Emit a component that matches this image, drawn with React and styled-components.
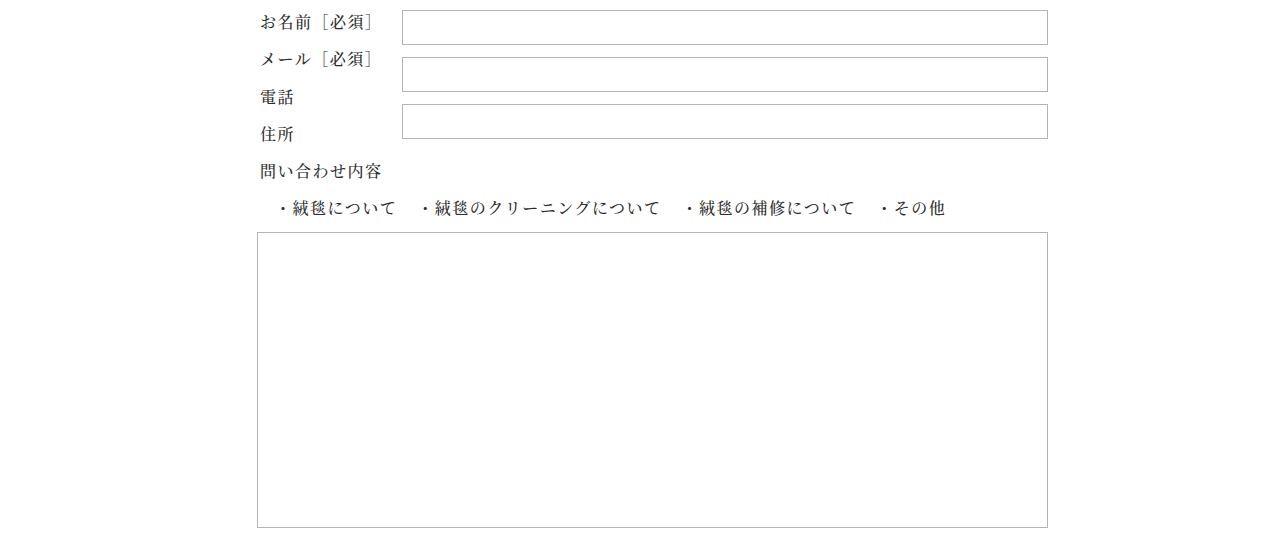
import React from "react";
import styled, { createGlobalStyle } from "styled-components";

const GlobalStyle = createGlobalStyle`
  html, body {
    margin: 0;
    padding: 0;
    background: #fff;
  }
  body {
    font-family: "Noto Serif CJK JP", "Noto Sans CJK JP", "Liberation Serif", serif;
    color: #2e2e2e;
  }
`;

// フォーム全体
const Form = styled.form`
  width: 791px;
  margin: 0 0 0 257px;
  padding-top: 3px;
  font-size: 16px;
  font-weight: 500;
  letter-spacing: 1.5px;
  line-height: 37.3px;
`;

const Fields = styled.div`
  display: flex;
  align-items: flex-start;
`;

const Labels = styled.div`
  display: flex;
  flex-direction: column;
  width: 145px;
  padding-left: 3px;
  box-sizing: border-box;
`;

const Label = styled.span`
  display: block;
  white-space: nowrap;
`;

const Inputs = styled.div`
  flex: 1;
  display: flex;
  flex-direction: column;
  gap: 12px;
  padding-top: 7px;
`;

const Input = styled.input`
  display: block;
  width: 100%;
  height: 35px;
  box-sizing: border-box;
  border: 1px solid #b4b4b4;
  border-radius: 0;
  background: #fff;
  font: inherit;
  outline: none;
`;

const Heading = styled.div`
  padding-left: 3px;
`;

const Options = styled.div`
  display: flex;
  gap: 20px;
  padding-left: 18px;
  white-space: nowrap;
`;

const Option = styled.span``;

const Message = styled.textarea`
  display: block;
  width: 100%;
  height: 296px;
  margin-top: 5px;
  box-sizing: border-box;
  border: 1px solid #b4b4b4;
  border-radius: 0;
  resize: none;
  font: inherit;
  outline: none;
`;

const topics = [
  "絨毯について",
  "絨毯のクリーニングについて",
  "絨毯の補修について",
  "その他",
];

export default function App() {
  return (
    <>
      <GlobalStyle />
      <Form onSubmit={(e) => e.preventDefault()}>
        <Fields>
          <Labels>
            <Label>お名前［必須］</Label>
            <Label>メール［必須］</Label>
            <Label>電話</Label>
            <Label>住所</Label>
          </Labels>
          <Inputs>
            <Input type="text" />
            <Input type="email" />
            <Input type="text" />
          </Inputs>
        </Fields>
        <Heading>問い合わせ内容</Heading>
        <Options>
          {topics.map((t) => (
            <Option key={t}>・{t}</Option>
          ))}
        </Options>
        <Message />
      </Form>
    </>
  );
}
